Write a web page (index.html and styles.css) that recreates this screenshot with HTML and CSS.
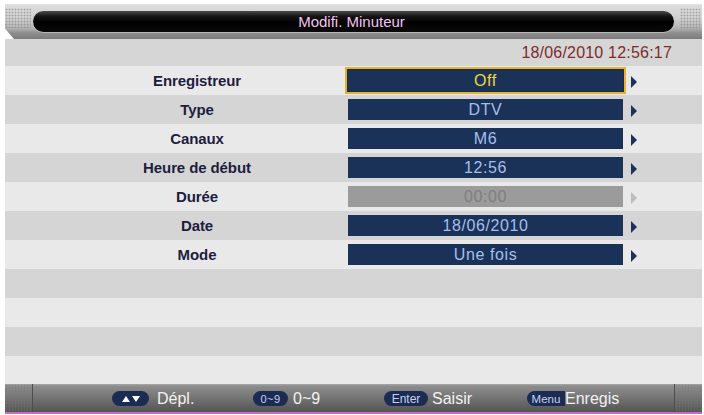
FILE: index.html
```html
<!DOCTYPE html>
<html lang="fr">
<head>
<meta charset="utf-8">
<title>Modifi. Minuteur</title>
<link rel="stylesheet" href="styles.css">
</head>
<body>
<div class="screen">
  <header class="header">
    <div class="dots dots-left"></div>
    <div class="title-pill"><span class="title">Modifi. Minuteur</span></div>
    <div class="dots dots-right"></div>
  </header>
  <div class="dateband"><span class="clock">18/06/2010 12:56:17</span></div>
  <div class="rows">
    <div class="row light">
      <span class="label">Enregistreur</span>
      <span class="value selected">Off</span>
      <span class="arrow"></span>
    </div>
    <div class="row dark">
      <span class="label">Type</span>
      <span class="value">DTV</span>
      <span class="arrow"></span>
    </div>
    <div class="row light">
      <span class="label">Canaux</span>
      <span class="value">M6</span>
      <span class="arrow"></span>
    </div>
    <div class="row dark">
      <span class="label">Heure de début</span>
      <span class="value">12:56</span>
      <span class="arrow"></span>
    </div>
    <div class="row light">
      <span class="label">Durée</span>
      <span class="value disabled">00:00</span>
      <span class="arrow arrow-disabled"></span>
    </div>
    <div class="row dark">
      <span class="label">Date</span>
      <span class="value">18/06/2010</span>
      <span class="arrow"></span>
    </div>
    <div class="row light">
      <span class="label">Mode</span>
      <span class="value">Une fois</span>
      <span class="arrow"></span>
    </div>
    <div class="row dark"></div>
    <div class="row light"></div>
    <div class="row dark"></div>
    <div class="row light"></div>
  </div>
  <footer class="footer">
    <div class="dots dots-foot-left"></div>
    <div class="hints">
      <div class="hint">
        <span class="key key-nav">
          <svg width="18" height="8" viewBox="0 0 18 8"><polygon points="0,7 4,1 8,7" fill="#ffffff"/><polygon points="10,1 18,1 14,7" fill="#ffffff"/></svg>
        </span>
        <span class="hint-text gap9">Dépl.</span>
      </div>
      <div class="hint">
        <span class="key key-num">0~9</span>
        <span class="hint-text gap6">0~9</span>
      </div>
      <div class="hint">
        <span class="key key-enter">Enter</span>
        <span class="hint-text gap5">Saisir</span>
      </div>
      <div class="hint">
        <span class="key key-menu">Menu</span>
        <span class="hint-text">Enregis</span>
      </div>
    </div>
    <div class="dots dots-foot-right"></div>
  </footer>
</div>
</body>
</html>
```

FILE: styles.css
```css
* { box-sizing: border-box; }

html, body {
  margin: 0;
  padding: 0;
  background: #ffffff;
}

body {
  font-family: "Liberation Sans", Arial, sans-serif;
  width: 704px;
  height: 415px;
  overflow: hidden;
}

.screen {
  margin: 4px 2px 0 5px;
  width: 697px;
  border-top: 1px solid #e4e4e4;
}

/* ---------- header ---------- */
.header {
  height: 34px;
  display: flex;
  align-items: flex-start;
  background: linear-gradient(to bottom, #dcdcdc 0%, #cfcfcf 40%, #b4b4b4 68%, #8e8e8e 82%, #7c7c7c 100%);
  clip-path: polygon(0 0, 100% 0, 100% 100%, 9px 100%, 0 70%);
}

.dots {
  background-color: transparent;
  background-image: radial-gradient(circle, rgba(120,120,120,0.55) 0.8px, transparent 1.1px);
  background-size: 3px 3px;
}

.dots-left {
  width: 26px;
  height: 20px;
  margin: 3px 2px 0 0;
}

.dots-right {
  width: 20px;
  height: 22px;
  margin: 3px 0 0 6px;
}

.title-pill {
  width: 641px;
  height: 21px;
  margin-top: 6px;
  border-radius: 11px;
  background: linear-gradient(to bottom, #4a4a4a 0%, #151515 25%, #000000 55%, #0a0a0a 100%);
  box-shadow: 0 1px 0 rgba(255,255,255,0.35);
  display: flex;
  align-items: center;
  justify-content: center;
}

.title {
  color: #f3c3f3;
  font-size: 15px;
  padding-right: 4px;
}

/* ---------- date band ---------- */
.dateband {
  height: 27px;
  background: #d6d6d6;
  display: flex;
  align-items: center;
  justify-content: flex-end;
  padding-right: 30px;
}

.clock {
  color: #7a2d2d;
  font-size: 16px;
  letter-spacing: 0.2px;
}

/* ---------- rows ---------- */
.rows {
  display: flex;
  flex-direction: column;
}

.row {
  height: 29px;
  display: grid;
  grid-template-columns: 294px 275px 6px;
  column-gap: 4px;
  align-items: center;
  padding-left: 45px;
}

.row:last-child { height: 28px; }

.row > .arrow { margin-left: 4px; }

.light { background: #e9e9e9; }
.dark { background: #d5d5d5; }

.label {
  text-align: center;
  color: #1d1d3f;
  font-size: 15px;
  font-weight: bold;
  letter-spacing: -0.1px;
}

.value {
  height: 21px;
  background: #1a3158;
  color: #a6bfea;
  font-size: 16px;
  letter-spacing: 0.6px;
  display: flex;
  align-items: center;
  justify-content: center;
}

.value.selected {
  color: #f2d34a;
  box-shadow: 0 0 0 1px #1e2b44, 0 0 0 3px #e3b431;
}

.value.disabled {
  background: #9b9b9b;
  color: #7e7e7e;
}

.arrow {
  width: 0;
  height: 0;
  border-top: 6px solid transparent;
  border-bottom: 6px solid transparent;
  border-left: 6px solid #1a3158;
  margin-top: 2px;
}

.arrow.arrow-disabled {
  border-left-color: #bcbcbc;
}

/* ---------- footer ---------- */
.footer {
  height: 28px;
  display: flex;
  background: linear-gradient(to bottom, #a8a8a8 0%, #8c8c8c 8%, #7a7a7a 40%, #606060 80%, #545454 100%);
  border-bottom: 2px solid #c56cc5;
  box-sizing: content-box;
}

.dots-foot-left {
  width: 28px;
  height: 100%;
  border-right: 1px solid #4e4e4e;
}

.dots-foot-right {
  width: 28px;
  height: 100%;
  border-left: 1px solid #4e4e4e;
}

.hints {
  flex: 1;
  display: grid;
  grid-template-columns: 141px 131px 143px auto;
  align-items: center;
  padding-left: 79px;
}

.hint {
  display: flex;
  align-items: center;
  padding-top: 1px;
}

.key {
  height: 15px;
  border-radius: 8px;
  background: #1c2b52;
  color: #c6d2ee;
  font-size: 11px;
  display: flex;
  align-items: center;
  justify-content: center;
}

.key-nav { width: 37px; }
.key-num { width: 35px; letter-spacing: 0.5px; }
.key-enter { width: 44px; font-size: 12px; }
.key-menu { width: 38px; font-size: 11.5px; border-radius: 8px 0 0 8px; }

.hint-text {
  color: #f2f2f2;
  font-size: 16px;
}

.gap9 { margin-left: 8px; }
.gap6 { margin-left: 5px; }
.gap5 { margin-left: 4px; }
```
